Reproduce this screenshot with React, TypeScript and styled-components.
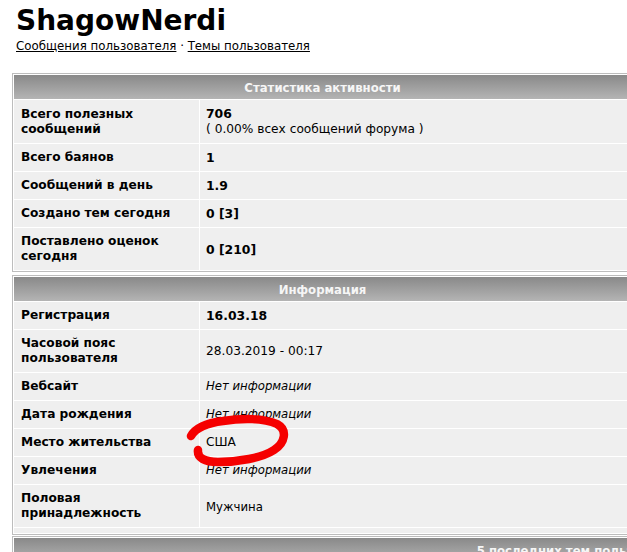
import React from 'react'
import styled, { createGlobalStyle } from 'styled-components'

type ValueKind = 'bold' | 'plain' | 'italic' | 'narrow'

interface Row {
    label: string[]
    value: React.ReactNode
    kind: ValueKind
}

const statsRows: Row[] = [
    {
        label: ['Всего полезных', 'сообщений'],
        value: <><b>706</b><br />( 0.00% всех сообщений форума )</>,
        kind: 'plain',
    },
    { label: ['Всего баянов'], value: '1', kind: 'bold' },
    { label: ['Сообщений в день'], value: '1.9', kind: 'bold' },
    { label: ['Создано тем сегодня'], value: '0 [3]', kind: 'bold' },
    { label: ['Поставлено оценок', 'сегодня'], value: '0 [210]', kind: 'bold' },
]

const infoRows: Row[] = [
    { label: ['Регистрация'], value: '16.03.18', kind: 'bold' },
    { label: ['Часовой пояс', 'пользователя'], value: '28.03.2019 - 00:17', kind: 'plain' },
    { label: ['Вебсайт'], value: 'Нет информации', kind: 'italic' },
    { label: ['Дата рождения'], value: 'Нет информации', kind: 'italic' },
    { label: ['Место жительства'], value: 'США', kind: 'plain' },
    { label: ['Увлечения'], value: 'Нет информации', kind: 'italic' },
    { label: ['Половая', 'принадлежность'], value: 'Мужчина', kind: 'narrow' },
]

interface TableProps {
    title: string
    rows: Row[]
    gap: number
    withFooter?: boolean
}

const ProfileTable = ({ title, rows, gap, withFooter }: TableProps) => (
    <Section $width={621} $gap={gap}>
        <colgroup>
            <LabelCol />
            <col />
        </colgroup>
        <tbody>
            <tr>
                <HeadCell colSpan={2}>{title}</HeadCell>
            </tr>
            {rows.map((row) => (
                <tr key={row.label.join(' ')}>
                    <Label>
                        {row.label.map((line, i) => (
                            <React.Fragment key={line}>
                                {i > 0 && <br />}
                                {line}
                            </React.Fragment>
                        ))}
                    </Label>
                    <Value $kind={row.kind}>{row.value}</Value>
                </tr>
            ))}
            {withFooter && (
                <tr>
                    <Spacer colSpan={2} />
                </tr>
            )}
        </tbody>
    </Section>
)

const App = () => {
    return (
        <Page>
            <GlobalStyle />
            <Profile>
                <UserName>ShagowNerdi</UserName>
                <Links>
                    <a href="#posts">Сообщения пользователя</a> · <a href="#topics">Темы пользователя</a>
                </Links>
            </Profile>
            <ProfileTable title="Статистика активности" rows={statsRows} gap={3} />
            <ProfileTable title="Информация" rows={infoRows} gap={1} withFooter />
            <Section $width={1140} $gap={0}>
                <tbody>
                    <tr>
                        <HeadCell>5 последних тем пользователя</HeadCell>
                    </tr>
                </tbody>
            </Section>
            <Scribble viewBox="180 412 115 58" width={115} height={58}>
                <path
                    d="M191 436 C 196 427, 207 423, 223 421 C 242 418, 264 418, 277 424 C 288 430, 285 443, 274 450 C 262 458, 238 462, 218 462 C 205 462, 197 458, 198 450"
                    fill="none"
                    stroke="#f50000"
                    strokeWidth={8.5}
                    strokeLinecap="round"
                    strokeLinejoin="round"
                />
            </Scribble>
        </Page>
    )
}

const GlobalStyle = createGlobalStyle`
    html, body {
        margin: 0;
        padding: 0;
        background: #ffffff;
        overflow: hidden;
    }
    body {
        font-family: "DejaVu Sans", Verdana, sans-serif;
        color: #000000;
    }
`

const Page = styled.div`
    position: relative;
    width: 1400px;
    padding: 4px 0 0 12px;
`

const Profile = styled.div`
    padding: 0 0 0 4px;
    margin-bottom: 19px;
`

const UserName = styled.h1`
    margin: 0;
    font-size: 28px;
    line-height: 34px;
    font-weight: bold;
`

const Links = styled.div`
    font-size: 11.8px;
    line-height: 16px;

    a {
        color: #000000;
        text-decoration: underline;
    }
`

const Section = styled.table<{ $width: number; $gap: number }>`
    width: ${({ $width }) => $width}px;
    table-layout: fixed;
    border: 1px solid #bdbdbd;
    border-spacing: 1px;
    background: #ffffff;
    margin-bottom: ${({ $gap }) => $gap}px;
    font-size: 12px;
`

const LabelCol = styled.col`
    width: 185px;
`

const HeadCell = styled.th`
    height: 24px;
    padding: 0;
    background: linear-gradient(#898989, #b4b4b4);
    color: #f6f6f6;
    font-family: "DejaVu Sans Condensed", "DejaVu Sans", sans-serif;
    font-size: 13px;
    font-weight: bold;
    text-align: center;
    white-space: nowrap;
    overflow: hidden;
`

const Label = styled.td`
    padding: 6px 7px;
    background: #efefef;
    font-size: 12.2px;
    font-weight: bold;
    line-height: 15px;
    vertical-align: middle;
`

const Value = styled.td<{ $kind: ValueKind }>`
    padding: 6px 6px;
    background: #efefef;
    line-height: 15px;
    vertical-align: middle;
    font-size: ${({ $kind }) => ($kind === 'bold' ? '12.4px' : $kind === 'italic' ? '11.7px' : '12.2px')};
    font-weight: ${({ $kind }) => ($kind === 'bold' ? 'bold' : 'normal')};
    font-style: ${({ $kind }) => ($kind === 'italic' ? 'italic' : 'normal')};
    ${({ $kind }) => $kind === 'narrow' && 'font-family: "DejaVu Sans Condensed", "DejaVu Sans", sans-serif; font-size: 13px;'}

    b {
        font-size: 12.4px;
    }
`

const Spacer = styled.td`
    height: 5px;
    padding: 0;
    background: #efefef;
`

const Scribble = styled.svg`
    position: absolute;
    left: 180px;
    top: 412px;
    pointer-events: none;
    filter: blur(0.4px);
`

export default App
